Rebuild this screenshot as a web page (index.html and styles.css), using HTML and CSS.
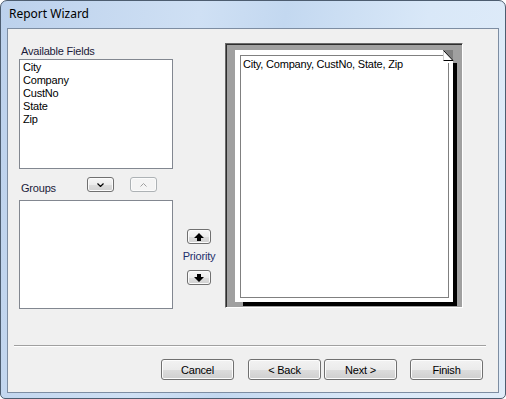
FILE: index.html
```html
<!DOCTYPE html>
<html lang="en">
<head>
  <meta charset="UTF-8" />
  <title>Report Wizard</title>
  <link rel="stylesheet" href="styles.css">
</head>
<body>

  <div class="window">
    <div class="titlebar">Report Wizard</div>

    <div class="client">
      <div class="wizard-main">

        <div class="fields-col">
          <div class="field-label">Available Fields</div>
          <ul class="listbox fields-list">
            <li>City</li>
            <li>Company</li>
            <li>CustNo</li>
            <li>State</li>
            <li>Zip</li>
          </ul>

          <div class="group-row">
            <span class="group-label">Groups</span>
            <button class="mini-btn" type="button">
              <svg width="7" height="4" viewBox="0 0 7 4"><path d="M0.5 0.5 L3.5 3.5 L6.5 0.5" fill="none" stroke="#000" stroke-width="1.2"/></svg>
            </button>
            <button class="mini-btn disabled" type="button">
              <svg width="7" height="4" viewBox="0 0 7 4"><path d="M0.5 3.5 L3.5 0.5 L6.5 3.5" fill="none" stroke="#a0a0a0" stroke-width="1"/></svg>
            </button>
          </div>

          <ul class="listbox groups-list"></ul>
        </div>

        <div class="priority-col">
          <button class="arrow-btn" type="button">
            <svg width="10" height="8" viewBox="0 0 10 8"><path d="M5 0 L10 5 L7 5 L7 8 L3 8 L3 5 L0 5 Z" fill="#000"/></svg>
          </button>
          <div class="priority-label">Priority</div>
          <button class="arrow-btn" type="button">
            <svg width="10" height="8" viewBox="0 0 10 8"><path d="M3 0 L7 0 L7 3 L10 3 L5 8 L0 3 L3 3 Z" fill="#000"/></svg>
          </button>
        </div>

        <div class="preview-frame">
          <div class="preview-page">
            <div class="page-inner">City, Company, CustNo, State, Zip</div>
            <svg class="dogear" width="14" height="13" viewBox="0 0 14 13">
              <rect x="0" y="0" width="14" height="13" fill="#a0a0a0"/>
              <rect x="0" y="10" width="10" height="3" fill="#fff"/>
              <path d="M0 0 L10 0 L10 10 Z" fill="#808080"/>
              <path d="M0.5 0 L0.5 10.5 L10 10.5 Z" fill="#fff"/>
              <path d="M0.5 0.5 L10 10.5 L0.5 10.5" fill="none" stroke="#000" stroke-width="1"/>
            </svg>
          </div>
        </div>

      </div>

      <div class="separator"></div>

      <div class="wizard-buttons">
        <button class="btn" type="button">Cancel</button>
        <button class="btn btn-back" type="button">&lt; Back</button>
        <button class="btn btn-next" type="button">Next &gt;</button>
        <button class="btn btn-finish" type="button">Finish</button>
      </div>
    </div>
  </div>

</body>
</html>
```

FILE: styles.css
```css
:root {
  --face: #f0f0f0;
  --list-border: #828790;
  --btn-border: #707070;
  --label: #1b1b3a;
}

* {
  box-sizing: border-box;
}

html, body {
  margin: 0;
  background: #ffffff;
}

body {
  width: 506px;
  height: 399px;
  font-family: "Liberation Sans", Arial, sans-serif;
  font-size: 11px;
  letter-spacing: -0.2px;
  color: #000;
}

.window {
  width: 506px;
  height: 399px;
  border: 1px solid #4d5d70;
  border-radius: 7px 7px 5px 5px;
  padding: 0 6px 5px;
  background: linear-gradient(100deg, #bcd1ec 0%, #cfe0f4 35%, #c3d8f0 50%, #d9e8f8 75%, #e0ecf9 100%);
  display: flex;
  flex-direction: column;
}

.titlebar {
  height: 27px;
  padding: 5px 0 0 2px;
  font-family: "Noto Sans", "Open Sans", sans-serif;
  font-size: 12px;
  letter-spacing: 0;
  line-height: 16px;
}

.client {
  height: 365px;
  border: 1px solid #7d8da2;
  background: var(--face);
  display: flex;
  flex-direction: column;
}

/* main area */

.wizard-main {
  display: grid;
  grid-template-columns: 154px 52px 238px;
  padding: 14px 0 0 11px;
}

.fields-col {
  display: flex;
  flex-direction: column;
}

.field-label {
  height: 16px;
  line-height: 16px;
  padding-left: 2px;
  color: var(--label);
}

.listbox {
  margin: 0;
  padding: 1px 0 0 3px;
  list-style: none;
  background: #fff;
  border: 1px solid var(--list-border);
}

.listbox li {
  line-height: 13px;
}

.fields-list {
  height: 110px;
}

.groups-list {
  height: 109px;
  margin-top: 8px;
}

.group-row {
  display: flex;
  align-items: flex-end;
  height: 15px;
  margin-top: 8px;
}

.group-label {
  width: 71px;
  padding-left: 2px;
  line-height: 14px;
  margin-bottom: -3px;
  color: var(--label);
}

.mini-btn,
.arrow-btn {
  display: flex;
  align-items: center;
  justify-content: center;
  padding: 0;
  border: 1px solid var(--btn-border);
  border-radius: 3px;
  background: linear-gradient(#f6f6f6 0%, #ececec 50%, #dddddd 51%, #d2d2d2 100%);
  box-shadow: inset 0 0 0 1px #fbfbfb;
}

.mini-btn {
  width: 28px;
  height: 15px;
  margin-right: 16px;
}

.mini-btn.disabled {
  border-color: #adb2b5;
  background: #f4f4f4;
}

.priority-col {
  display: flex;
  flex-direction: column;
  align-items: center;
  padding-top: 186px;
}

.arrow-btn {
  width: 24px;
  height: 15px;
}

.priority-label {
  line-height: 14px;
  margin: 5px 0 7px;
  color: #1e2f6b;
}

/* report preview */

.preview-frame {
  height: 265px;
  background: #a0a0a0;
  border-top: 1px solid #6a6a6a;
  border-left: 1px solid #6a6a6a;
  border-right: 1px solid #ffffff;
  border-bottom: 1px solid #ffffff;
  box-shadow: inset 1px 1px 0 #2e2e2e;
  padding: 6px 0 0 9px;
}

.preview-page {
  position: relative;
  width: 218px;
  height: 252px;
  background: #fff;
  box-shadow: 6px 6px 0 -2px #000;
  padding: 5px 4px 4px 5px;
}

.page-inner {
  height: 100%;
  border: 1px solid #808080;
  padding: 1px 2px;
  line-height: 14px;
}

.dogear {
  position: absolute;
  top: 0;
  right: -4px;
  display: block;
}

/* bottom */

.separator {
  margin: 36px 12px 0 6px;
  border-top: 1px solid #a0a0a0;
  border-bottom: 1px solid #ffffff;
}

.wizard-buttons {
  display: flex;
  justify-content: flex-end;
  padding: 12px 15px 0 0;
}

.btn {
  width: 73px;
  height: 21px;
  padding: 0;
  font-family: inherit;
  font-size: 11px;
  letter-spacing: -0.2px;
  color: #000;
  border: 1px solid var(--btn-border);
  border-radius: 3px;
  background: linear-gradient(#f2f2f2 0%, #ebebeb 50%, #dddddd 51%, #cfcfcf 100%);
  box-shadow: inset 0 0 0 1px #fcfcfc;
}

.btn-back {
  margin-left: 14px;
}

.btn-next {
  margin-left: 3px;
}

.btn-finish {
  margin-left: 13px;
}
```
